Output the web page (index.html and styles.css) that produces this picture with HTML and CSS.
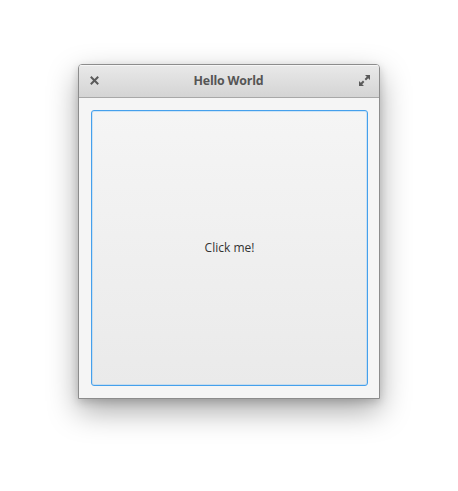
FILE: index.html
```html
<!DOCTYPE html>
<html>
<head>
<meta charset="utf-8">
<link rel="stylesheet" href="styles.css">
</head>
<body>
<div class="stage">
  <div class="window">
    <div class="titlebar">
      <span class="tb-btn close" aria-label="Close">
        <svg width="9" height="9" viewBox="0 0 9 9"><path d="M1.5 1.5 L7.5 7.5 M7.5 1.5 L1.5 7.5" stroke="#5a5a5a" stroke-width="2" stroke-linecap="square"/></svg>
      </span>
      <span class="title">Hello World</span>
      <span class="tb-btn max" aria-label="Maximize">
        <svg width="13" height="13" viewBox="0 0 13 13"><path d="M7 1 H12 V6 L10.2 4.2 L8 6.4 L6.6 5 L8.8 2.8 Z M6 12 H1 V7 L2.8 8.8 L5 6.6 L6.4 8 L4.2 10.2 Z" fill="#5a5a5a"/></svg>
      </span>
    </div>
    <div class="content">
      <button class="btn">Click me!</button>
    </div>
  </div>
</div>
</body>
</html>
```
FILE: styles.css
```css
html, body {
  margin: 0;
  padding: 0;
  background: #ffffff;
}
body {
  min-height: 491px;
}
.stage {
  padding: 64px 0 60px 78px;
}
.window {
  width: 300px;
  border: 1px solid #8c8c8c;
  border-radius: 4px 4px 0 0;
  background: #f5f5f5;
  box-shadow: 0 12px 30px rgba(0,0,0,0.34), 0 3px 8px rgba(0,0,0,0.16);
  font-family: "Open Sans", sans-serif;
  overflow: hidden;
}
.titlebar {
  display: flex;
  align-items: center;
  justify-content: space-between;
  padding: 0 8px 2px 11px;
  box-sizing: border-box;
  background: linear-gradient(#e9e9e9, #d4d4d4);
  border-bottom: 1px solid #a8a8a8;
  box-shadow: inset 0 1px 0 #f6f6f6;
  height: 33px;
}
.tb-btn {
  display: flex;
  align-items: center;
  justify-content: center;
}
.title {
  font-weight: bold;
  font-size: 12.4px;
  color: #555;
  letter-spacing: -0.2px;
}
.content {
  padding: 12px 11px 12px 12px;
  display: flex;
}
.btn {
  width: 277px;
  height: 276px;
  border: 1px solid #45a0ec;
  border-radius: 3px;
  background: linear-gradient(#f5f5f5, #eaeaea);
  box-shadow: inset 0 0 0 1px rgba(120,190,245,0.3);
  font-family: "Open Sans", sans-serif;
  font-size: 12px;
  color: #333;
  padding: 0 0 2px 0;
  margin: 0;
}
```
